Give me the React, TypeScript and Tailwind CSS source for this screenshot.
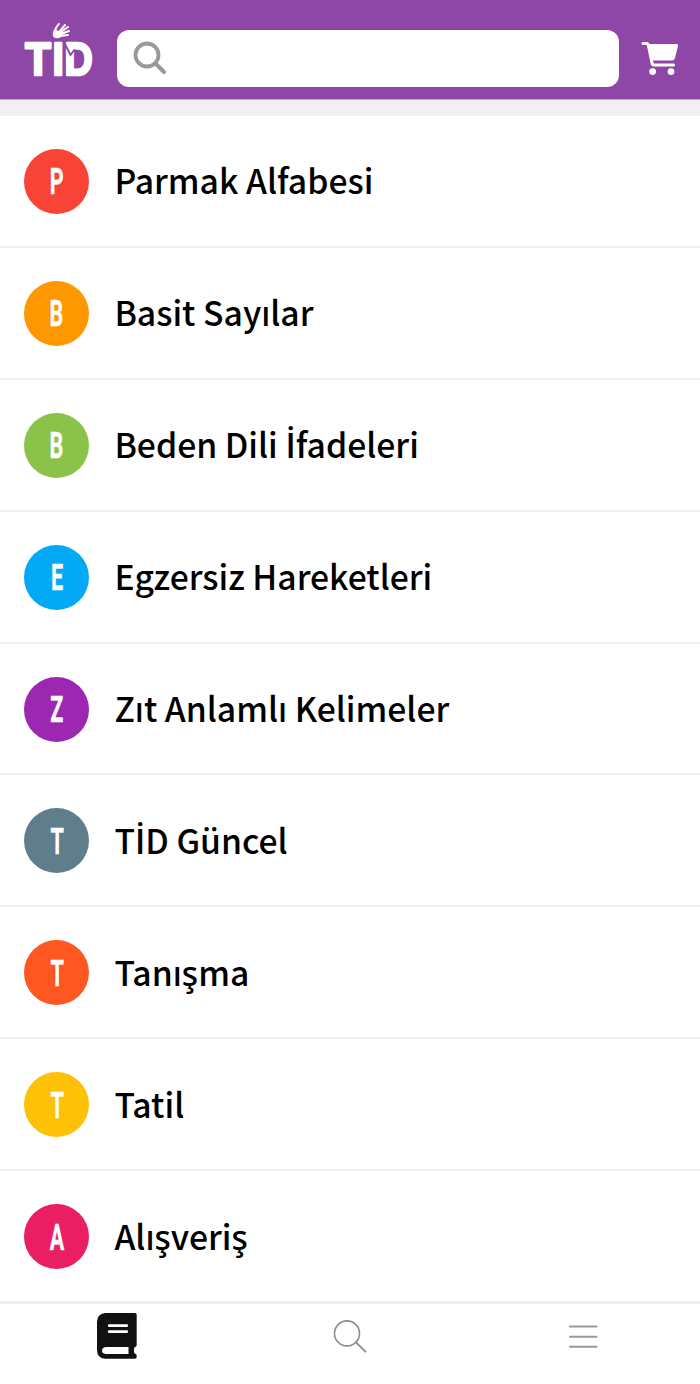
import React, { useState } from "react";

interface Category {
    name: string;
    letter: string;
    color: string;
}

const categories: Category[] = [
    { name: "Parmak Alfabesi", letter: "P", color: "bg-[#f84437]" },
    { name: "Basit Sayılar", letter: "B", color: "bg-[#ff9800]" },
    { name: "Beden Dili İfadeleri", letter: "B", color: "bg-[#8bc34a]" },
    { name: "Egzersiz Hareketleri", letter: "E", color: "bg-[#03a9f4]" },
    { name: "Zıt Anlamlı Kelimeler", letter: "Z", color: "bg-[#9c27b0]" },
    { name: "TİD Güncel", letter: "T", color: "bg-[#607d8b]" },
    { name: "Tanışma", letter: "T", color: "bg-[#ff5722]" },
    { name: "Tatil", letter: "T", color: "bg-[#ffc107]" },
    { name: "Alışveriş", letter: "A", color: "bg-[#e91e63]" },
];

function Logo() {
    return (
        <svg width="76" height="80" viewBox="-3 -10 76 80" className="shrink-0" aria-label="TİD">
            <g fill="white" stroke="white" strokeWidth="2.6" strokeLinejoin="round" fontFamily="'Liberation Sans', sans-serif" fontWeight="700" fontSize="46">
                <text x="1.2" y="52.8" textLength="25.6" lengthAdjust="spacingAndGlyphs">T</text>
                <text x="28.4" y="52.8" textLength="11.4" lengthAdjust="spacingAndGlyphs">I</text>
                <text x="40.6" y="52.8" textLength="28.2" lengthAdjust="spacingAndGlyphs">D</text>
            </g>
            {/* crease in the D */}
            <path d="M41 22 L46.5 33 L50.5 27.5" fill="none" stroke="#8e47a6" strokeWidth="1.8" />
            {/* hand over the I */}
            <path d="M29 14 Q28 9 31 7 L34 9 Q38 8 39 11 Q39 15 35 16 Q30 17 29 14Z" fill="white" />
            <g stroke="white" strokeWidth="2" strokeLinecap="round" fill="none">
                <path d="M31 10 Q31 6 35 2" />
                <path d="M35 10 L41 3" />
                <path d="M37 10 L44 5" />
                <path d="M37 12 L45 9" />
                <path d="M36 14 L44 13" />
            </g>
        </svg>
    );
}

function CartIcon() {
    return (
        <svg width="38" height="36" viewBox="0 0 38 36" className="shrink-0" fill="none">
            <path d="M2 2.5 H6 Q7 2.5 7.3 4 L11 22 Q11.4 24 13 24 H32.5" stroke="white" strokeWidth="3" strokeLinecap="round" strokeLinejoin="round" />
            <path d="M6.5 3 H35.5 Q37.5 3 37 5 L34 17 Q33.3 19.5 31 19.5 H11Z" fill="white" />
            <circle cx="11.6" cy="30.6" r="3.4" fill="white" />
            <circle cx="30" cy="30.6" r="3.4" fill="white" />
        </svg>
    );
}

function BookIcon() {
    return (
        <svg width="40" height="46" viewBox="0 0 40 46" fill="none">
            <path d="M8 0 H38 Q39.7 0 39.7 2 V32 Q39.7 33.5 38.2 34 Q37 34.5 37 36 V39 Q37 40.3 38.2 40.8 Q39.7 41.3 39.7 43 V44 Q39.7 45.7 38 45.7 H8 Q0 45 0 37 V9 Q0 1 8 0Z" fill="#111" />
            <path d="M12.2 12.6 H29.8 M12.2 18.6 H29.8" stroke="white" strokeWidth="2.8" strokeLinecap="round" />
            <path d="M8.5 34 H31.5 V41 H8.5 Q5 40.5 5 37.5 Q5 34.5 8.5 34Z" fill="white" />
        </svg>
    );
}

// the CJK face has no dotted capital I, so that letter takes another family
function CategoryName({ name }: { name: string }) {
    return (
        <span className="mb-[2px] ml-[25px] font-['Noto_Sans_CJK_SC','Noto_Sans',sans-serif] text-[33.7px] leading-[50px] font-medium whitespace-nowrap text-black">
            {name.split(/(İ)/).map((part, i) =>
                part === "İ" ? (
                    <span key={i} className="font-['Open_Sans',sans-serif] leading-none font-semibold">{part}</span>
                ) : (
                    part
                )
            )}
        </span>
    );
}

export default function App() {
    const [query, setQuery] = useState("");

    return (
        <div className="flex h-[1384px] w-[700px] flex-col overflow-hidden bg-white">
            <header className="flex h-[99px] shrink-0 items-start bg-[#8e47a6] pl-[21px]">
                <div className="mt-3">
                    <Logo />
                </div>
                <label className="mt-[29.5px] ml-5 flex h-[57.5px] w-[502px] items-center rounded-xl bg-white pl-4">
                    <svg width="34" height="34" viewBox="0 0 34 34" fill="none" stroke="#999" className="shrink-0">
                        <circle cx="14" cy="14" r="11.5" strokeWidth="3.8" />
                        <path d="M22.5 22.5 L31 31" strokeWidth="4" strokeLinecap="round" />
                    </svg>
                    <input
                        value={query}
                        onChange={(e) => setQuery(e.target.value)}
                        className="min-w-0 flex-1 px-3 text-2xl outline-none"
                        aria-label="Ara"
                    />
                </label>
                <button className="mt-[41px] ml-[22px]" aria-label="Sepet">
                    <CartIcon />
                </button>
            </header>
            <div className="h-[17px] shrink-0 border-t border-[#c6a2d1] bg-[#efeff4]" />

            {/* Categories */}
            <ul className="shrink-0">
                {categories.map((category) => (
                    <li key={category.name} className="flex h-[131.9px] items-center border-b-2 border-[#f0f0f0] pt-px pl-[24.4px] last:h-[129.8px] last:border-b-0">
                        <span className={`flex size-[65px] shrink-0 items-center justify-center rounded-full ${category.color}`}>
                            <span className="mt-[2px] scale-x-[0.6] font-[Roboto,sans-serif] text-[36px] leading-none font-bold text-white [-webkit-text-stroke:0.3px_white]">{category.letter}</span>
                        </span>
                        <CategoryName name={category.name} />
                    </li>
                ))}
            </ul>

            {/* Tab bar */}
            <nav className="grid flex-1 grid-cols-3 items-start border-t-3 border-[#efeff2] bg-white">
                <button className="flex justify-center pt-[9px]" aria-label="Sözlük">
                    <BookIcon />
                </button>
                <button className="flex justify-center pt-4" aria-label="Ara">
                    <svg width="34" height="34" viewBox="0 0 34 34" fill="none" stroke="#8c8c8c">
                        <circle cx="14" cy="13.4" r="12.5" strokeWidth="1.6" />
                        <path d="M23 22.4 L32.5 31.7" strokeWidth="1.8" strokeLinecap="round" />
                    </svg>
                </button>
                <button className="flex justify-center pt-5" aria-label="Menü">
                    <svg width="30" height="26" viewBox="0 0 30 26" stroke="#999" strokeWidth="2" strokeLinecap="round">
                        <path d="M2 2.5 H28.5 M2 12.7 H28.5 M2 22.8 H28.5" />
                    </svg>
                </button>
            </nav>
        </div>
    );
}
